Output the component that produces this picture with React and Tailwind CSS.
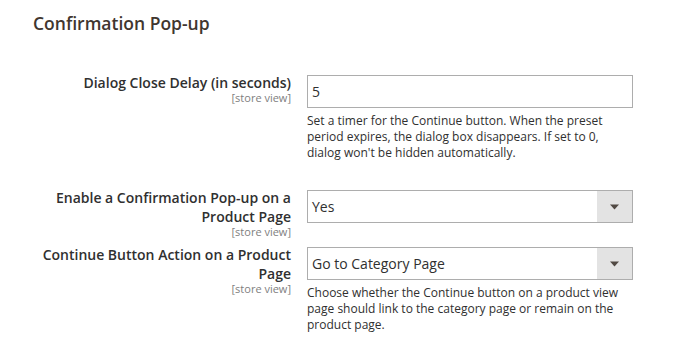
import React from "react";

function Label({ lines }) {
  return (
    <div className="w-[291px] shrink-0 text-right -mt-px">
      <div className="text-[14px] leading-[19px] font-semibold text-[#303030]">
        {lines.map((l, i) => (
          <div key={i}>{l}</div>
        ))}
      </div>
      <div className="text-[11px] leading-[12px] text-[#808080]">[store view]</div>
    </div>
  );
}

function Select({ value }) {
  return (
    <div className="flex h-[33px] w-full border border-[#adadad] bg-white">
      <div className="flex flex-1 items-center pl-[4px] text-[14px] leading-[19px] text-[#303030]">{value}</div>
      <div className="flex w-[35px] items-center justify-center bg-[#e3e3e3]">
        <svg width="9" height="6" viewBox="0 0 9 6">
          <path d="M0 0.5 H9 L4.5 5.5 Z" fill="#514943" />
        </svg>
      </div>
    </div>
  );
}

function Note({ children }) {
  return <div className="mt-[5px] text-[12px] leading-[16px] text-[#303030]">{children}</div>;
}

export default function App() {
  return (
    <div className="w-[685px] h-[352px] overflow-hidden bg-white font-['Open_Sans',sans-serif]">
      <div className="pl-[33px] pt-[11px] text-[17.5px] leading-[24px] font-semibold text-[#41362f]">
        Confirmation Pop-up
      </div>

      <div className="mt-[39px] flex items-start gap-[16px]">
        <Label lines={["Dialog Close Delay (in seconds)"]} />
        <div className="w-[326px] mt-px">
          <div className="flex h-[33px] items-center border border-[#adadad] bg-white pl-[4px] text-[14px] leading-[19px] text-[#303030]">
            5
          </div>
          <Note>
            Set a timer for the Continue button. When the preset period expires, the dialog box disappears. If set to 0,
            dialog won't be hidden automatically.
          </Note>
        </div>
      </div>

      <div className="mt-[28px] flex items-start gap-[16px]">
        <Label lines={["Enable a Confirmation Pop-up on a", "Product Page"]} />
        <div className="w-[326px] mt-px">
          <Select value="Yes" />
        </div>
      </div>

      <div className="mt-[8px] flex items-start gap-[16px]">
        <Label lines={["Continue Button Action on a Product", "Page"]} />
        <div className="w-[326px] mt-px">
          <Select value="Go to Category Page" />
          <Note>
            Choose whether the Continue button on a product view page should link to the category page or remain on the
            product page.
          </Note>
        </div>
      </div>
    </div>
  );
}
